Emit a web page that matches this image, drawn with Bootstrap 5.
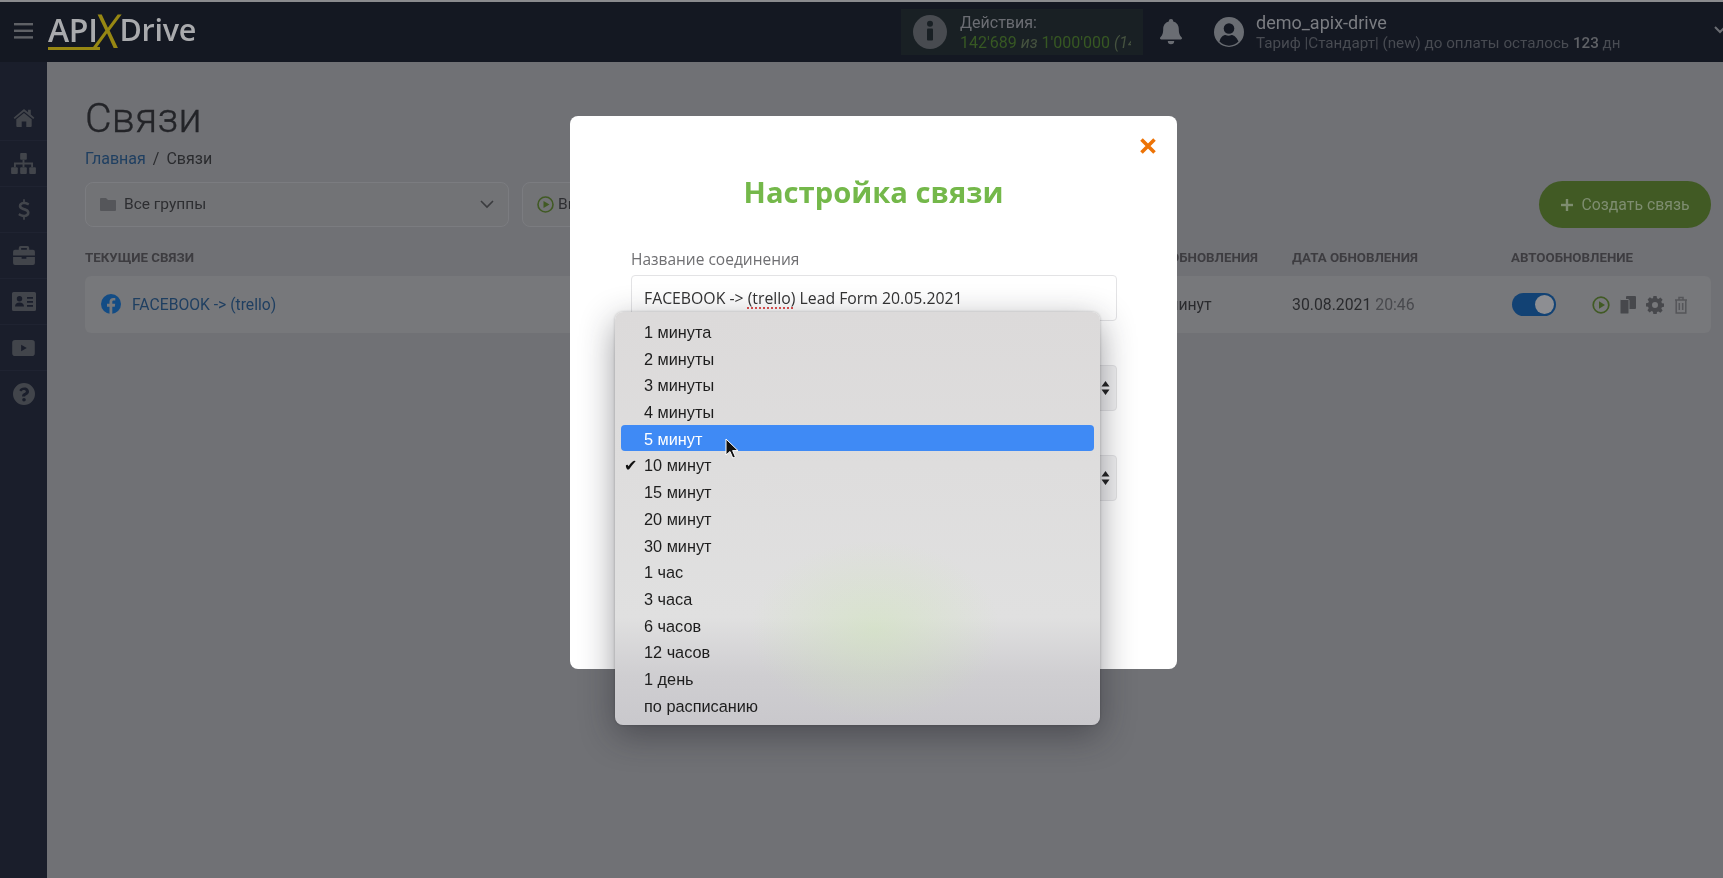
<!DOCTYPE html>
<html lang="ru">
<head>
<meta charset="utf-8">
<title>Связи</title>
<link rel="stylesheet" href="https://cdn.jsdelivr.net/npm/bootstrap@5.3.0/dist/css/bootstrap.min.css">
<style>
html,body{height:100%;overflow:hidden}
body{background:#707175;font-family:Roboto,sans-serif;color:#2a2b2e;position:relative;width:1723px;height:878px}
.shell{height:878px;display:flex;flex-direction:column;border-top:2px solid #8a8b8e;filter:blur(.55px)}
.topbar{height:60px;background:#141822;flex:none;color:#6b6d73;position:relative}
.burger{width:48px;flex:none}
.burger svg{display:block;margin-left:14px;margin-top:-3px}
.brand{font:600 32px/1 "Open Sans",sans-serif;color:#a9aaad;letter-spacing:-.3px;width:853px;flex:none;position:relative;height:40px;margin-top:-5px}
.brand .api{position:relative}
.brand .api::after{content:"";position:absolute;left:0;right:-2px;bottom:-4px;height:3px;background:#978713}
.brand .xx{color:#978713;font-size:47px;font-weight:500;line-height:34px;display:inline-block;transform:scaleX(.95) skewX(-8deg);margin:0 -1px 0 -4px;vertical-align:-4px}
.brand .drv{font-size:30.5px}
.infobox{width:242px;height:46px;background:#192024;overflow:hidden;flex:none;padding-left:12px;gap:13px}
.infotext{font-size:16px;line-height:20px;white-space:nowrap;overflow:hidden;width:171px;margin-top:1px}
.greennum{color:#375823}
.greyit{color:#45523f;font-style:italic}
.bellwrap{width:71px;flex:none;padding-right:15px;text-align:center}
.uname{font-size:18px;line-height:20px;color:#7b7d82}
.usub{font-size:15.2px;line-height:19px;color:#484b52;white-space:nowrap;margin-top:1px}
.usub b{font-weight:500;color:#606267}
.topchev{position:absolute;right:-3px;top:24px}
.lower{flex:1;min-height:0}
.sidebar{width:47px;background:#1a1e2b;flex:none;padding-top:33px}
.sideitem{height:46px;display:flex;align-items:center;justify-content:center;border-bottom:1px solid #1f2331}
.sideitem svg{fill:#42454b}
.mainarea{flex:1;padding:0 12px 0 38px;min-width:0}
.pagetitle{font:300 41px/1 Roboto,sans-serif;color:#232428;margin:36px 0 0;height:44px;letter-spacing:.2px;-webkit-text-stroke:.35px #232428}
.crumbs{font-size:16px;line-height:20px;margin-top:7px;height:20px}
.crumbs a{color:#1f3f61;text-decoration:none}
.crumbs .sep{margin:0 7px}
.filters{margin-top:13px;height:46px}
.fbox{height:45px;background:#727376;border:1px solid #7b7c80;border-radius:8px;font-size:15.5px;color:#2d2e31}
.fgroups{width:424px;padding:0 14px 0 14px}
.fstatus{width:200px;margin-left:13px;padding:0 14px}
.createbtn{height:47px;width:172px;background:#415a24;color:#7e8d70;border-radius:24px;font-size:15.8px;margin-left:auto;justify-content:center;gap:9px;margin-top:-1px}
.tablegrid{display:grid;grid-template-columns:1fr 195px 219px 200px}
.heads{font-size:13.3px;font-weight:700;color:#3d3c40;margin-top:21px;height:27px;line-height:18px;text-transform:uppercase}
.datarow{height:57px;background:#77787b;border-radius:6px;align-items:center;font-size:15.8px}
.namecell{padding-left:16px;gap:11px;color:#1f3f61;font-size:15.7px}
.valuecell{padding-left:48px}
.timeg{color:#48494d}
.switchy{width:44px;height:23px;border-radius:12px;background:#124274;position:relative;display:block;flex:none;margin-left:1px}
.switchy::after{content:"";position:absolute;right:2px;top:2px;width:19px;height:19px;border-radius:50%;background:#8d8e92}
.actions{gap:10px;margin-left:36px}
.dlg{position:absolute;left:570px;top:116px;width:607px;height:553px;background:#fff;border-radius:8px;padding:0 61px;filter:blur(.4px)}
.dlgclose{position:absolute;right:21px;top:22px;color:#ed7306;line-height:0}
.dlgtitle{font:700 29.2px/40px "Open Sans",sans-serif;color:#74b84a;text-align:center;margin:0;padding-top:56px;height:96px;margin-left:-61px;margin-right:-61px}
.dlglabel{font:400 15.5px/20px "Open Sans",sans-serif;color:#6f6f72;margin:37px 0 6px;display:block}
.dlginput{height:46px;border:1px solid #e3e3e5;border-radius:4px;font:400 15.8px/44px "Open Sans",sans-serif;color:#333;padding:0 12px;white-space:nowrap;width:486px}
.spell{text-decoration:underline dotted #e05050 1.5px;text-underline-offset:3px}
.dlgselect{height:46px;border:1px solid #e3e3e5;border-radius:4px;width:486px;background:#f1f1f2;margin-top:44px;display:flex;align-items:center;justify-content:flex-end;padding-right:6px}
.popmenu{position:absolute;left:615px;top:312px;width:485px;height:413px;border-radius:8px;padding:6px 6px;list-style:none;margin:0;filter:blur(.35px);
 background:radial-gradient(ellipse 125px 90px at 260px 318px,rgba(205,230,180,.45),rgba(223,223,223,0) 100%),linear-gradient(180deg,#dcdada 0,#e0e0e0 74%,#cfced1 88%,#c9c8cc 100%);
 box-shadow:0 10px 34px rgba(30,30,40,.45),0 0 3px rgba(0,0,0,.25);font:400 16.3px/29.5px "Liberation Sans",sans-serif;color:#1d1d1d}
.popmenu li{height:26.7px;padding-left:23px;position:relative;border-radius:4px;white-space:nowrap}
.popmenu li.hot{background:#3f8af5;color:#fff}
.popmenu li.chk::before{content:"✔";position:absolute;left:3px;top:0;color:#111;font-family:"DejaVu Sans",sans-serif;font-size:16px}
.mcursor{position:absolute;left:725px;top:438px;pointer-events:none}
</style>
</head>
<body>
<div class="shell">
  <header class="topbar d-flex align-items-center">
    <div class="burger">
      <svg width="19" height="16" viewBox="0 0 19 16" fill="#5f6166"><rect y="0" width="19" height="2.4"/><rect y="6.6" width="19" height="2.4"/><rect y="13.2" width="19" height="2.4"/></svg>
    </div>
    <div class="brand d-flex align-items-center"><span class="api">API</span><span class="xx">X</span><span class="drv">Drive</span></div>
    <div class="infobox d-flex align-items-center">
      <svg width="34" height="34" viewBox="0 0 34 34"><circle cx="17" cy="17" r="17" fill="#484b50"/><rect x="14" y="13.5" width="6" height="12" rx="1" fill="#192024"/><circle cx="17" cy="8.8" r="3" fill="#192024"/></svg>
      <div class="infotext"><div>Действия:</div><div><span class="greennum">142'689</span> <span class="greyit">из</span> <span class="greennum">1'000'000</span> <span class="greyit">(14%)</span></div></div>
    </div>
    <div class="bellwrap">
      <svg width="22" height="26" viewBox="0 0 22 26" fill="#6a6d73"><path d="M11 0a2.2 2.2 0 0 0-2.2 2.4C5 3.400 3.200 6.400 3.200 10c0 5.500-1.700 7-3 8.600-.5.800 0 1.800 1 1.800h19.600c1 0 1.500-1 1-1.800-1.300-1.600-3-3.100-3-8.600 0-3.600-1.800-6.600-5.600-7.600A2.200 2.200 0 0 0 11 0zM7.800 22a3.200 3.200 0 0 0 6.400 0z"/></svg>
    </div>
    <svg class="flex-none me-2" width="30" height="30" viewBox="0 0 30 30"><circle cx="15" cy="15" r="15" fill="#6a6d73"/><circle cx="15" cy="11.500" r="5.300" fill="#141822"/><path d="M5.500 24.500c1-4.500 4-6.500 6-6.500 2 1 4 1 6 0 2 0 5 2 7 6.500a13 13 0 0 1-19 0z" fill="#141822"/></svg>
    <div class="ps-1" style="margin-top:1px">
      <div class="uname">demo_apix-drive</div>
      <div class="usub">Тариф |Стандарт| (new) до оплаты осталось <b>123</b> дн</div>
    </div>
    <svg class="topchev" width="12" height="8" viewBox="0 0 12 8" fill="none" stroke="#6b6d73" stroke-width="2"><path d="M1 1l5 5 5-5"/></svg>
  </header>
  <div class="lower d-flex">
    <nav class="sidebar">
      <div class="sideitem"><svg width="22" height="19" viewBox="0 0 24 21"><path d="M12 1 0.500 10.700l1.300 1.500L12 3.800l10.200 8.400 1.300-1.500-4-3.400V2h-3v2.800zM12 5.500 3.500 12.500V20a1 1 0 0 0 1 1H9.500v-6h5v6h5a1 1 0 0 0 1-1v-7.500z"/></svg></div>
      <div class="sideitem"><svg width="25" height="21" viewBox="0 0 26 22"><rect x="9.500" y="0" width="7" height="7" rx="1"/><rect x="0" y="15" width="7" height="7" rx="1"/><rect x="9.500" y="15" width="7" height="7" rx="1"/><rect x="19" y="15" width="7" height="7" rx="1"/><path d="M12 7h2v3h9v5h-2v-3h-7v3h-2v-3H5v3H3v-5h9z"/></svg></div>
      <div class="sideitem"><svg width="12" height="21" viewBox="0 0 14 24"><path d="M6 0h2v3c2.500.2 4.500 1.300 5.300 2l-1.500 2.400C10.500 6.500 9 5.800 7 5.800c-1.800 0-3 .7-3 1.900 0 1.300 1.400 1.800 3.800 2.600 3 1 5.700 2.200 5.700 5.500 0 2.800-2 4.700-5.500 5.100V24H6v-3.100c-2.500-.3-4.600-1.400-5.800-2.500l1.700-2.400c1.400 1.100 3.300 2 5.200 2 2 0 3.300-.8 3.300-2.100 0-1.400-1.500-2-3.900-2.800C3.600 12.100.9 11 .9 7.900.9 5.400 3 3.500 6 3.100z"/></svg></div>
      <div class="sideitem"><svg width="22" height="19" viewBox="0 0 23 20"><path d="M8 0h7a2 2 0 0 1 2 2v2h4a2 2 0 0 1 2 2v4H0V6a2 2 0 0 1 2-2h4V2a2 2 0 0 1 2-2zm.5 2.200V4h6V2.200zM0 11.500h9v2h5v-2h9V18a2 2 0 0 1-2 2H2a2 2 0 0 1-2-2z"/></svg></div>
      <div class="sideitem"><svg width="24" height="19" viewBox="0 0 24 19"><path fill-rule="evenodd" d="M1.500 0h21A1.500 1.500 0 0 1 24 1.500v16a1.500 1.500 0 0 1-1.500 1.500h-21A1.500 1.500 0 0 1 0 17.500v-16A1.500 1.500 0 0 1 1.500 0zM7.500 4a2.700 2.700 0 1 0 0 5.400 2.700 2.700 0 0 0 0-5.400zM3 14.500h9c0-2.500-2-4-4.500-4S3 12 3 14.500zM15 5v1.800h6V5zm0 4v1.800h6V9zm0 4v1.800h6V13z"/></svg></div>
      <div class="sideitem"><svg width="23" height="16" viewBox="0 0 24 17"><path fill-rule="evenodd" d="M3 0h18a3 3 0 0 1 3 3v11a3 3 0 0 1-3 3H3a3 3 0 0 1-3-3V3a3 3 0 0 1 3-3zM9.500 5v7l6-3.500z"/></svg></div>
      <div class="sideitem border-0"><svg width="22" height="22" viewBox="0 0 22 22"><path fill-rule="evenodd" d="M11 0a11 11 0 1 1 0 22 11 11 0 0 1 0-22zm.2 4.500c-2.300 0-3.800 1-4.900 2.700l1.900 1.400c.7-.9 1.300-1.500 2.700-1.500 1 0 2 .6 2 1.400 0 .7-.6 1-1.500 1.500-1.100.6-2.300 1.300-2.300 3.100v.5h3c0-1.500 3.900-1.500 3.900-5 0-2.600-2.600-4.100-3.800-4.100zM11 15a1.800 1.800 0 1 0 0 3.600 1.800 1.800 0 0 0 0-3.600z"/></svg></div>
    </nav>
    <main class="mainarea">
      <h1 class="pagetitle">Связи</h1>
      <div class="crumbs"><a href="#">Главная</a><span class="sep">/</span><span>Связи</span></div>
      <div class="filters d-flex align-items-start">
        <div class="fbox fgroups d-flex align-items-center">
          <svg class="me-2" width="16" height="13" viewBox="0 0 16 13" fill="#55565a"><path d="M1 0h5l2 2h7a1 1 0 0 1 1 1v9a1 1 0 0 1-1 1H1a1 1 0 0 1-1-1V1a1 1 0 0 1 1-1z"/></svg>
          <span>Все группы</span>
          <svg class="ms-auto" width="14" height="9" viewBox="0 0 14 9" fill="none" stroke="#3a3b3e" stroke-width="1.600"><path d="M1 1l6 6 6-6"/></svg>
        </div>
        <div class="fbox fstatus d-flex align-items-center">
          <svg class="me-1" width="17" height="17" viewBox="0 0 17 17"><circle cx="8.500" cy="8.500" r="7.500" fill="none" stroke="#415a24" stroke-width="1.600"/><path d="M6.500 5l6 3.500-6 3.500z" fill="#415a24"/></svg>
          <span>Включенные</span>
        </div>
        <div class="d-flex align-items-center createbtn">
          <svg width="12" height="12" viewBox="0 0 12 12" fill="#7e8d70"><rect x="4.800" width="2.400" height="12"/><rect y="4.800" width="12" height="2.400"/></svg>
          <span>Создать связь</span>
        </div>
      </div>
      <div class="tablegrid heads">
        <div>Текущие связи</div>
        <div>Интервал обновления</div>
        <div>Дата обновления</div>
        <div>Автообновление</div>
      </div>
      <div class="tablegrid datarow">
        <div class="namecell d-flex align-items-center">
          <svg width="20" height="20" viewBox="0 0 20 20"><circle cx="10" cy="10" r="10" fill="#134c85"/><path d="M11.300 20v-7.300h2.500l.4-2.900h-2.900V8c0-.8.300-1.400 1.400-1.400h1.600V4c-.4 0-1.200-.1-2.100-.1-2.200 0-3.700 1.300-3.700 3.800v2.100H6v2.900h2.500V20z" fill="#77787b"/></svg>
          <span>FACEBOOK -&gt; (trello)</span>
        </div>
        <div class="valuecell">10 минут</div>
        <div>30.08.2021 <span class="timeg">20:46</span></div>
        <div class="d-flex align-items-center">
          <span class="switchy"></span>
          <div class="d-flex align-items-center actions">
            <svg width="18" height="18" viewBox="0 0 18 18"><circle cx="9" cy="9" r="7.800" fill="none" stroke="#415a24" stroke-width="1.700"/><path d="M7 5.300l6 3.700-6 3.700z" fill="#415a24"/></svg>
            <svg width="16" height="18" viewBox="0 0 16 18" fill="#47484c"><rect x="6" y="0" width="10" height="13" rx="1"/><rect x="0" y="3.500" width="9" height="14.500" rx="1" stroke="#77787b" stroke-width="1"/></svg>
            <svg width="18" height="18" viewBox="0 0 18 18"><path fill="#47484c" fill-rule="evenodd" d="M7.400 0h3.200l.4 2.300 1.400.6 2-1.300 2.200 2.200-1.300 2 .6 1.400 2.300.4v3.200l-2.300.4-.6 1.400 1.300 2-2.200 2.200-2-1.300-1.400.6-.4 2.300H7.400L7 15.700l-1.400-.6-2 1.300-2.200-2.200 1.300-2-.6-1.400L0 10.400V7.200l2.300-.4.6-1.400-1.300-2 2.200-2.200 2 1.300L7 2.300zM9 6a3 3 0 1 0 0 6 3 3 0 0 0 0-6z"/></svg>
            <svg width="14" height="18" viewBox="0 0 14 18" fill="none" stroke="#55565a" stroke-width="1.500"><path d="M1 4h12M5 4V1.500h4V4M2.200 4v13h9.600V4M5.300 7v7M8.700 7v7"/></svg>
          </div>
        </div>
      </div>
    </main>
  </div>
</div>

<div class="dlg" role="dialog">
  <div class="dlgclose"><svg width="16" height="16" viewBox="0 0 16 16" stroke="#ed7306" stroke-width="3.600" fill="none"><path d="M1.500 1.500l13 13M14.500 1.500l-13 13"/></svg></div>
  <h2 class="dlgtitle">Настройка связи</h2>
  <label class="dlglabel">Название соединения</label>
  <div class="dlginput">FACEBOOK -&gt; <span class="spell">(trello)</span> Lead Form 20.05.2021</div>
  <div class="dlgselect"><svg width="9" height="16" viewBox="0 0 9 16" fill="#222"><path d="M4.500 1l4 5.500H.500zM4.500 15l-4-5.500h8z"/></svg></div>
  <div class="dlgselect"><svg width="9" height="16" viewBox="0 0 9 16" fill="#222"><path d="M4.500 1l4 5.500H.500zM4.500 15l-4-5.500h8z"/></svg></div>
</div>

<ul class="popmenu">
  <li>1 минута</li><li>2 минуты</li><li>3 минуты</li><li>4 минуты</li>
  <li class="hot">5 минут</li><li class="chk">10 минут</li><li>15 минут</li><li>20 минут</li><li>30 минут</li>
  <li>1 час</li><li>3 часа</li><li>6 часов</li><li>12 часов</li><li>1 день</li><li>по расписанию</li>
</ul>
<svg class="mcursor" width="14" height="22" viewBox="0 0 14 22"><path d="M1 1v16l4-3.500 2.800 6.500 2.600-1.100L7.600 12.600H13z" fill="#111" stroke="#fff" stroke-width="1"/></svg>
</body>
</html>
